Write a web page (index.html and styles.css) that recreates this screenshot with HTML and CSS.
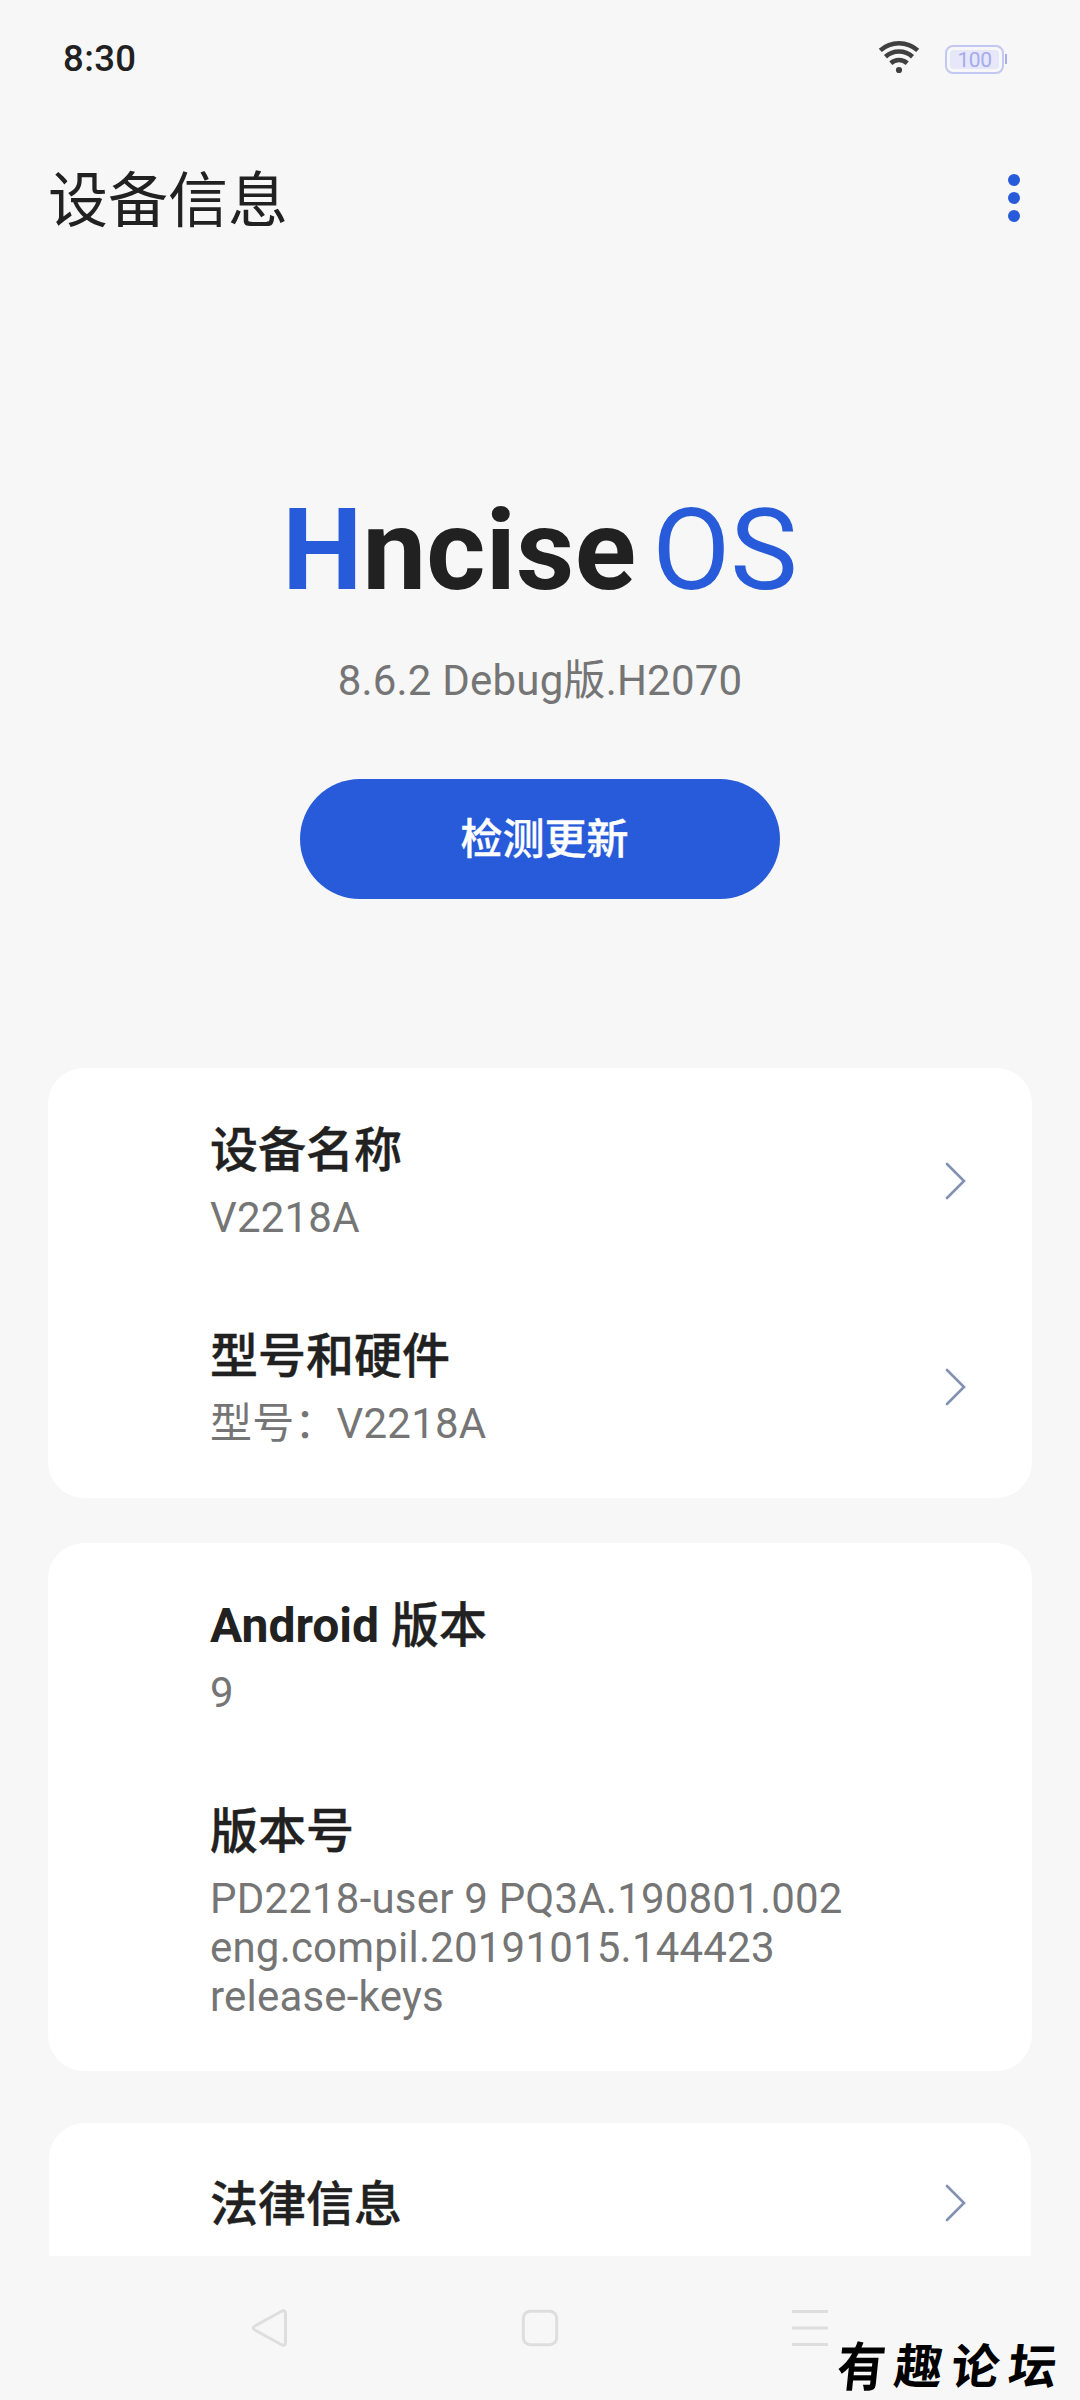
FILE: index.html
```html
<!DOCTYPE html>
<html lang="zh-CN">
<head>
<meta charset="utf-8">
<title>设备信息</title>
<link rel="stylesheet" href="styles.css">
</head>
<body>
<div class="screen">
  <div class="status-bar">
    <span class="clock">8:30</span>
    <div class="status-icons">
      <svg class="wifi" width="42" height="36" viewBox="0 0 42 36">
        <g fill="none" stroke="#404040" stroke-width="4.6">
          <path d="M2.3 12.4A28 28 0 0 1 39.7 12.4"/>
          <path d="M7.5 18.7A20 20 0 0 1 34.5 18.7"/>
          <path d="M12.800 25.200A12.300 12.300 0 0 1 29.200 25.200"/>
        </g>
        <circle cx="21" cy="32" r="3.100" fill="#404040"/>
      </svg>
      <div class="battery"><span class="battery-level">100</span></div>
      <span class="battery-tip"></span>
    </div>
  </div>

  <header class="title-bar">
    <h1 class="page-title">设备信息</h1>
    <svg class="more" width="12" height="48" viewBox="0 0 12 48" fill="#275bd9">
      <circle cx="6" cy="6" r="6"/><circle cx="6" cy="24" r="6"/><circle cx="6" cy="42" r="6"/>
    </svg>
  </header>

  <section class="hero">
    <div class="logo"><span class="logo-h">H</span><span class="logo-name">ncise</span><span class="logo-os">OS</span></div>
    <p class="version">8.6.2 Debug版.H2070</p>
    <button class="update">检测更新</button>
  </section>

  <main class="list">
    <section class="card">
      <div class="row">
        <div class="row-text"><h2 class="label">设备名称</h2><p class="value">V2218A</p></div>
        <svg class="chevron" width="24" height="40" viewBox="0 0 24 40"><path d="M3 3L20 20L3 37"/></svg>
      </div>
      <div class="row">
        <div class="row-text"><h2 class="label">型号和硬件</h2><p class="value">型号：V2218A</p></div>
        <svg class="chevron" width="24" height="40" viewBox="0 0 24 40"><path d="M3 3L20 20L3 37"/></svg>
      </div>
    </section>
    <section class="card">
      <div class="row">
        <div class="row-text"><h2 class="label"><span class="latin">Android</span> 版本</h2><p class="value">9</p></div>
      </div>
      <div class="row">
        <div class="row-text"><h2 class="label">版本号</h2><p class="value">PD2218-user 9 PQ3A.190801.002<br>eng.compil.20191015.144423<br>release-keys</p></div>
      </div>
    </section>
    <section class="card card-last">
      <div class="row">
        <div class="row-text"><h2 class="label">法律信息</h2></div>
        <svg class="chevron" width="24" height="40" viewBox="0 0 24 40"><path d="M3 3L20 20L3 37"/></svg>
      </div>
    </section>
  </main>

  <nav class="nav-bar">
    <svg width="40" height="40" viewBox="0 0 40 40"><path d="M4.600 18.200L31.500 3.300Q35.500 1.800 35.500 5.500V34.500Q35.500 38.200 31.500 36.700L4.600 21.800Q1.800 20 4.600 18.200Z"/></svg>
    <svg width="40" height="40" viewBox="0 0 40 40"><rect x="3.300" y="3.300" width="33.400" height="33.400" rx="7"/></svg>
    <svg width="40" height="40" viewBox="0 0 40 40"><path d="M2 3.500H38M2 20H38M2 36.500H38"/></svg>
  </nav>
  <div class="watermark"><span class="tall">有</span><span>趣</span><span>论</span><span>坛</span></div>
</div>
</body>
</html>
```
FILE: styles.css
```css
* { box-sizing: border-box; margin: 0; padding: 0; }

body {
  background: #f7f7f7;
  color: #212121;
  font-family: Roboto, "Noto Sans CJK SC", sans-serif;
}

.screen {
  position: relative;
  display: flex;
  flex-direction: column;
  width: 1080px;
  height: 2400px;
}

.status-bar {
  display: flex;
  justify-content: space-between;
  align-items: center;
  height: 118px;
  padding: 0 73px 0 63px;
}

.clock { padding-bottom: 2px; font-size: 36.5px; font-weight: 500; letter-spacing: 0.4px; }

.status-icons { display: flex; align-items: center; }

.wifi { margin: 0 25px 6px 0; }

.battery {
  width: 59px;
  height: 29px;
  padding: 3px;
  border: 2px solid #c3c7f4;
  border-radius: 8px;
}

.battery-level {
  display: block;
  height: 19px;
  border-radius: 4px;
  background: #e6e7f8;
  color: #a5abec;
  font: 21px/20px Roboto, sans-serif;
  letter-spacing: -0.5px;
  text-align: center;
}

.battery-tip { width: 2px; height: 10px; margin-left: 1px; background: #a9aeea; }

.title-bar {
  display: flex;
  justify-content: space-between;
  align-items: center;
  height: 160px;
  padding: 0 60px 0 48px;
}

.page-title { padding-top: 7px; font-size: 60px; font-weight: 400; line-height: 80px; }

.hero {
  display: flex;
  flex-direction: column;
  align-items: center;
  height: 790px;
  padding-top: 202px;
}

.logo { display: flex; font-size: 113.5px; line-height: 142px; font-weight: 700; white-space: nowrap; }
.logo-name { letter-spacing: 0.3px; }
.logo-os { margin-left: 16px; }
.logo-h { color: #275bd9; }
.logo-os { color: #275bd9; font-weight: 400; }

.version { margin-top: 29px; color: #757575; font-size: 42px; line-height: 60px; letter-spacing: 0.2px; }

.update {
  width: 480px;
  height: 120px;
  margin-top: 68px;
  padding: 2px 0 0 9px;
  border: 0;
  border-radius: 60px;
  background: #275bd9;
  color: #fff;
  font: 500 42px/60px Roboto, "Noto Sans CJK SC", sans-serif;
  -webkit-text-stroke: 0.4px #fff;
}

.list { height: 1188px; padding: 0 48px; }

.card { padding: 9px 0; margin-bottom: 45px; border-radius: 36px; background: #fff; }
.card + .card { margin-bottom: 52px; }
.card.card-last { margin: 0 1px; padding: 0; border-radius: 36px 36px 0 0; }

.row {
  display: flex;
  justify-content: space-between;
  align-items: center;
  min-height: 206px;
  padding: 39px 64px 38px 162px;
}
.card-last .row { min-height: 133px; padding: 27px 63px 0 161px; }
.card-last .label { padding-top: 3px; }

.label { font-size: 48px; font-weight: 500; line-height: 70px; -webkit-text-stroke: 0.4px #212121; }
.latin { font-weight: 700; -webkit-text-stroke: 0; }
.value { margin-top: 7px; padding-bottom: 3px; color: #757575; font-size: 42px; line-height: 49px; letter-spacing: 0.2px; }

.chevron { fill: none; stroke: #8290b4; stroke-width: 2.6; stroke-linecap: round; }

.nav-bar {
  display: flex;
  gap: 230px;
  height: 144px;
  padding: 52px 0 0 250px;
}
.nav-bar svg { fill: none; stroke: #dedede; stroke-width: 3; }

.watermark {
  position: absolute;
  left: 838px;
  top: 2329px;
  display: flex;
  gap: 9px;
  color: #000;
  font: 700 48px/68px "Noto Sans CJK SC", sans-serif;
  transform: skewX(-6deg);
}
.watermark .tall { transform: scaleY(1.1); }
```
